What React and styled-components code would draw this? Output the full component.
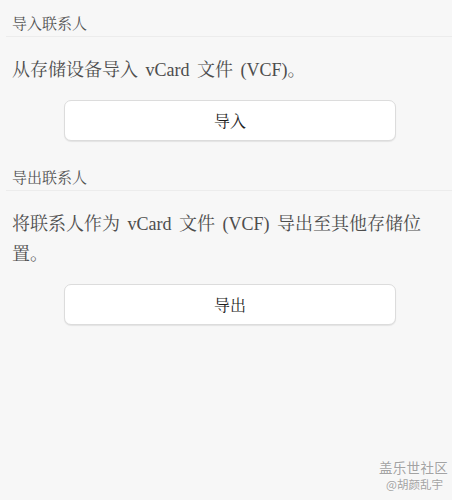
import React from "react";
import styled, { createGlobalStyle } from "styled-components";

const Global = createGlobalStyle`
  html, body {
    margin: 0;
    padding: 0;
    background: #f7f7f7;
  }
  #root {
    min-height: 100vh;
  }
`;

const serif = `"Liberation Serif", "Noto Serif CJK SC", "Noto Sans CJK SC", serif`;

const Page = styled.div`
  position: relative;
  min-height: 100vh;
  background: #f7f7f7;
  font-family: ${serif};
  display: flex;
  flex-direction: column;
`;

const Section = styled.section`
  display: flex;
  flex-direction: column;
  margin-top: ${(p) => p.$gap || 0}px;
`;

const SectionTitle = styled.div`
  margin: 0 0 0 6px;
  padding: 12px 6px 0;
  height: 24px;
  line-height: 24px;
  font-size: 15px;
  color: #505050;
  border-bottom: 1px solid #ececec;
`;

const Description = styled.p`
  margin: 18px 0 0;
  padding: 0 12px;
  font-size: 18px;
  line-height: 30px;
  color: #4d4d4d;
  word-spacing: 3px;
`;

const ActionButton = styled.button`
  margin: 15px 0 0 64px;
  width: 332px;
  height: 41px;
  background: #ffffff;
  border: 1px solid #dcdcdc;
  border-radius: 7px;
  box-shadow: 0 1px 1px rgba(0, 0, 0, 0.08);
  font-family: ${serif};
  font-size: 16px;
  color: #1e1e1e;
  cursor: pointer;
  padding: 0;
`;

const Watermark = styled.div`
  position: absolute;
  right: 4px;
  bottom: 8px;
  display: flex;
  flex-direction: column;
  align-items: flex-end;
  font-family: "Noto Sans CJK SC", sans-serif;
  color: #a3a3a3;
  text-shadow: 0 0 2px #fff;
`;

const MarkTitle = styled.span`
  font-size: 13.5px;
  line-height: 18px;
  letter-spacing: 0.3px;
`;

const MarkAuthor = styled.span`
  font-size: 11.5px;
  line-height: 16px;
  margin-right: 5px;
`;

export default function App() {
  return (
    <Page>
      <Global />
      <Section>
        <SectionTitle>导入联系人</SectionTitle>
        <Description>从存储设备导入 vCard 文件 (VCF)。</Description>
        <ActionButton>导入</ActionButton>
      </Section>
      <Section $gap={13}>
        <SectionTitle>导出联系人</SectionTitle>
        <Description>将联系人作为 vCard 文件 (VCF) 导出至其他存储位置。</Description>
        <ActionButton>导出</ActionButton>
      </Section>
      <Watermark>
        <MarkTitle>盖乐世社区</MarkTitle>
        <MarkAuthor>@胡颜乱宇</MarkAuthor>
      </Watermark>
    </Page>
  );
}
